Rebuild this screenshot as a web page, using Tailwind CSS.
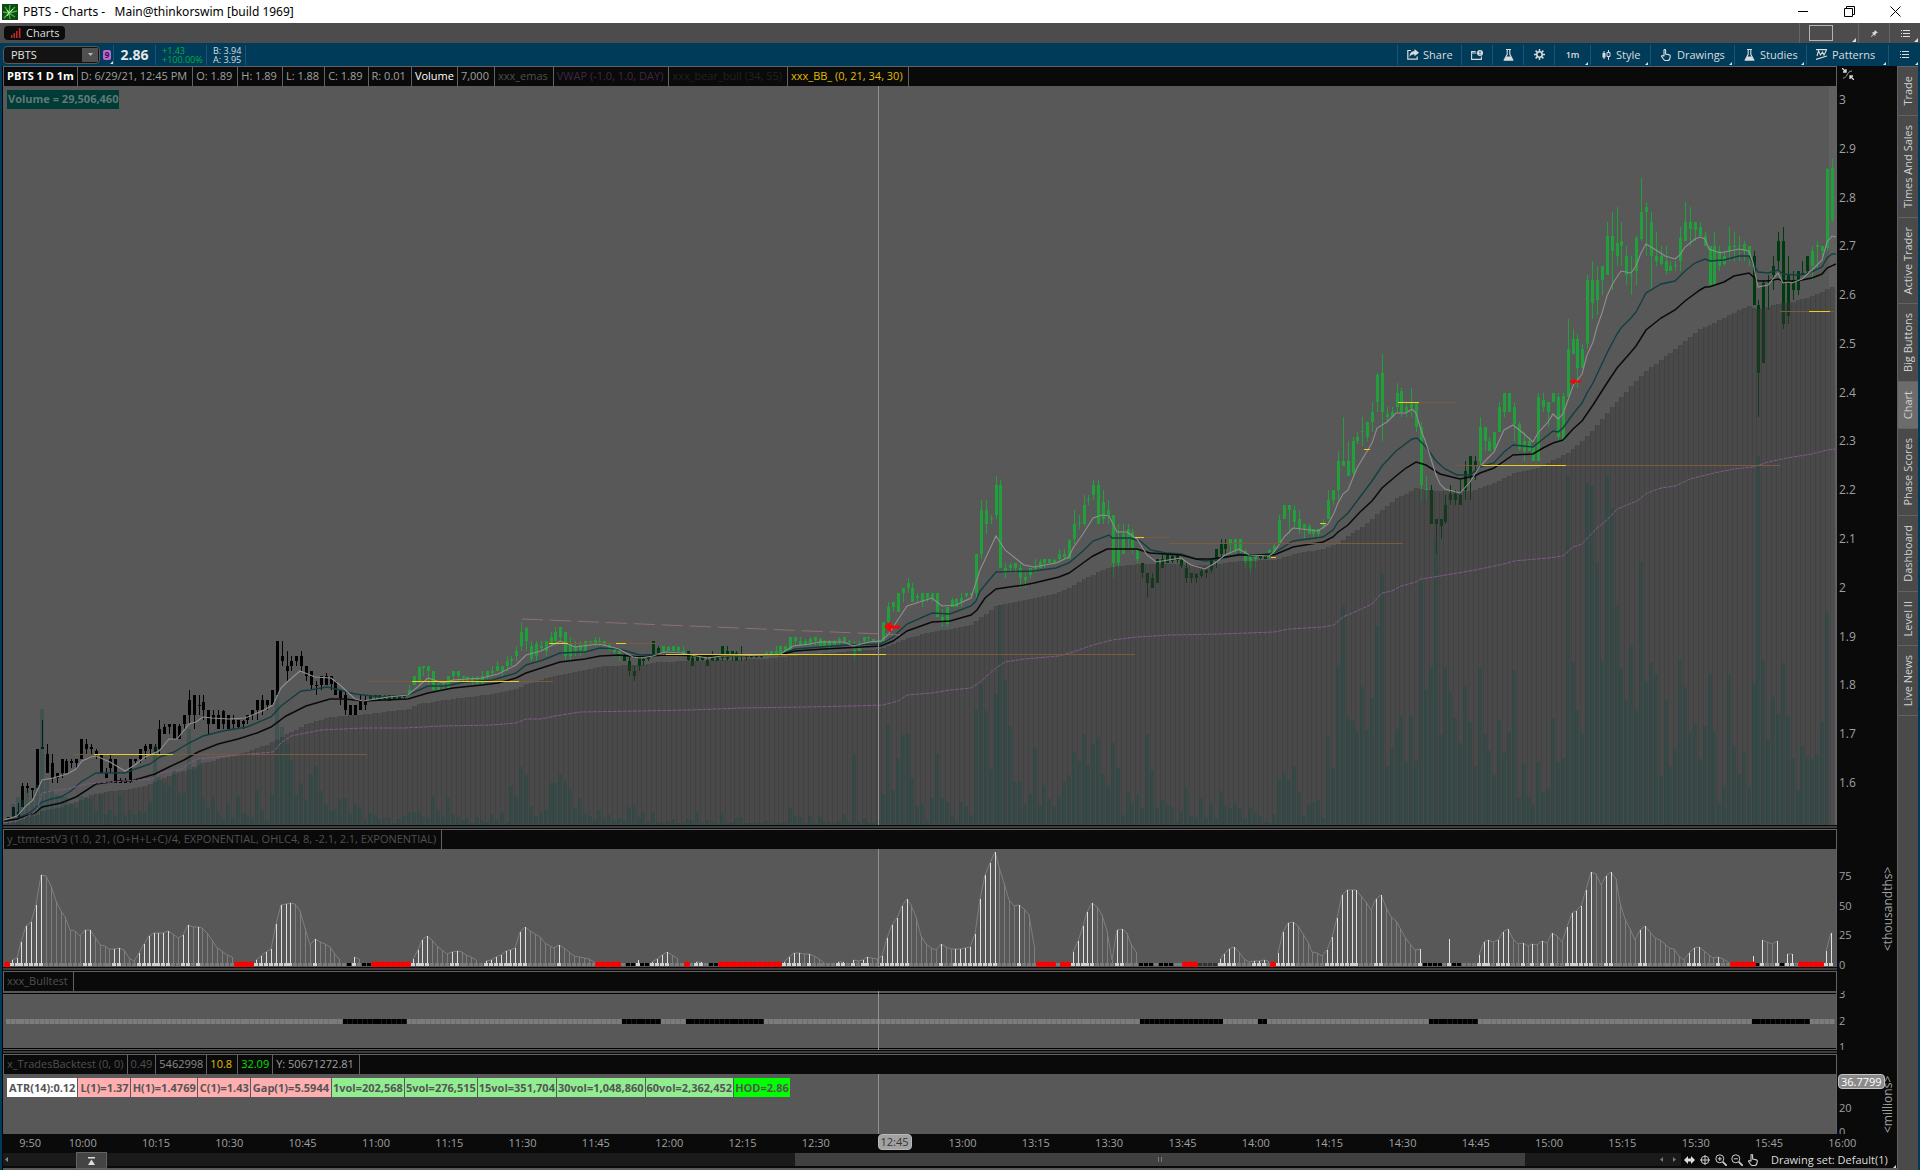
<!DOCTYPE html>
<html lang="en">
<head>
    <meta charset="UTF-8">
    <meta name="viewport" content="width=device-width, initial-scale=1.0">
    <title>PBTS - Charts - Main@thinkorswim [build 1969]</title>
    <script src="https://cdn.jsdelivr.net/npm/@tailwindcss/browser@4"></script>
</head>
<body class="bg-[#0a0a0a] font-['Open_Sans','Noto_Sans',sans-serif] text-[11px] leading-4 text-[#a0a0a0]">
<div class="min-h-screen flex flex-col">

    <!-- Title bar -->
    <header class="h-[23px] shrink-0 bg-white text-black flex items-center pl-[2px]">
        <svg class="w-4 h-4 shrink-0" viewBox="0 0 16 16">
            <rect width="16" height="16" fill="#0b4a13"/>
            <path d="M7 9L3 3M7 9L8 1M7 9l6-6M7 9l8-2M7 9l6 4M7 9l1 6M7 9l-5 5M7 9L1 8" stroke="#4fb045" stroke-width="1.300"/>
            <path d="M7 9L5 6M7 9l4-4M7 9l-2 3" stroke="#c8f5b4" stroke-width="1"/>
        </svg>
        <h1 class="ml-[5px] text-[12px] font-['Noto_Sans',sans-serif] whitespace-pre">PBTS - Charts -   Main@thinkorswim [build 1969]</h1>
        <div class="ml-auto mr-[2px] flex">
            <button aria-label="Minimize" class="w-[46px] h-[23px] flex items-center justify-center"><svg class="w-[11px] h-[11px]" viewBox="0 0 11 11"><path d="M0 5.5h10" stroke="#000"/></svg></button>
            <button aria-label="Restore" class="w-[46px] h-[23px] flex items-center justify-center"><svg class="w-[11px] h-[11px]" viewBox="0 0 11 11" fill="none" stroke="#000"><path d="M.5 2.5h8v8h-8zM2.5 2.5v-2h8v8h-2"/></svg></button>
            <button aria-label="Close" class="w-[46px] h-[23px] flex items-center justify-center"><svg class="w-[11px] h-[11px]" viewBox="0 0 11 11" stroke="#000"><path d="M.5.5l10 10M10.500.5l-10 10"/></svg></button>
        </div>
    </header>

    <!-- Tab row -->
    <nav class="h-5 shrink-0 bg-[#4c4c4c] flex items-center text-[#dcdcdc]">
        <a href="#" class="ml-1 h-[14px] w-[61px] rounded bg-[#0c0c0c] flex items-center pl-[7px] gap-[5px]">
            <svg class="w-[10px] h-[10px]" viewBox="0 0 10 10" fill="#c22a22"><path d="M0 7h1.500v3H0zM2.500 5H4v5H2.500zM5 3h1.500v7H5zM7.800 0h1.700v10H7.800z"/></svg>
            Charts
        </a>
        <div class="ml-auto flex h-full">
            <button aria-label="Layout" class="relative w-[59px] border-l border-[#646464] flex items-center pl-[9px]">
                <span class="block w-6 h-4 border border-[#b4b4b4]"></span>
                <svg class="absolute right-[2px] bottom-[1px] w-1 h-1" viewBox="0 0 4 4"><path d="M4 0v4H0z" fill="#ddd"/></svg>
            </button>
            <button aria-label="Pin" class="w-[31px] border-l border-[#646464] flex items-center justify-center"><svg class="w-[7px] h-[7px]" viewBox="0 0 9 9"><path d="M5 0l4 3.500-2 .5-1.500 2 .2 2L3.600 6 .5 9 0 8.500 2.800 5.200 1 3.400 3 3l1.800-1.500z" fill="#d8d8d8"/></svg></button>
            <button aria-label="Menu" class="relative w-[31px] border-l border-[#646464] flex items-center justify-center">
                <svg class="w-[9px] h-[9px]" viewBox="0 0 9 9" fill="#ddd"><path d="M0 1h1v1H0zM2 1h7v1H2zM0 4h1v1H0zM2 4h7v1H2zM0 7h1v1H0zM2 7h7v1H2z"/></svg>
                <svg class="absolute right-[2px] bottom-[1px] w-1 h-1" viewBox="0 0 4 4"><path d="M4 0v4H0z" fill="#ddd"/></svg>
            </button>
        </div>
    </nav>

    <!-- Symbol toolbar -->
    <div class="h-[23px] shrink-0 bg-[#003b5a] flex items-center text-[#dcdcdc] pl-[3px]">
        <label class="flex items-center w-[97px] h-[18px] rounded-sm border border-[#5a5a5a] bg-[#131313]">
            <input aria-label="Symbol" value="PBTS" class="min-w-0 flex-1 h-full bg-transparent pl-[7px] text-[#e4e4e4]">
            <span class="w-4 h-[14px] mr-px bg-[#505050] flex items-center justify-center"><svg class="w-[5px] h-[3px]" viewBox="0 0 5 3"><path d="M0 0h5L2.500 3z" fill="#bbb"/></svg></span>
        </label>
        <button class="relative w-[13px] h-full flex items-center pl-[3px]">
            <span class="w-2 h-[10px] rounded-xs bg-[#c164cf] text-[8px] leading-[10px] text-[#37123f] text-center font-bold">9</span>
            <svg class="absolute right-0 bottom-[2px] w-[3px] h-[3px]" viewBox="0 0 4 4"><path d="M4 0v4H0z" fill="#ddd"/></svg>
        </button>
        <div class="w-[42px] h-5 border-l border-[#1d5374] flex items-center justify-center text-[14px] font-bold text-[#e6e6e6]">2.86</div>
        <div class="w-[51px] h-5 border-l border-[#1d5374] pl-[6px] text-[9px] leading-[9px] pt-px text-[#00b140]">+1.43<br>+100.00%</div>
        <div class="w-[40px] h-5 border-x border-[#1d5374] pl-[6px] text-[9px] leading-[9px] pt-px whitespace-nowrap">B: 3.94<br>A: 3.95</div>
        <div class="ml-auto flex h-5">
            <button class="w-16 border-l border-[#1d5374] flex items-center gap-1 pl-[9px]">
                <svg class="w-3 h-[11px]" viewBox="0 0 12 11"><path d="M4 1.500H.8v8.700h9.400V7.500" fill="none" stroke="#dcdcdc" stroke-width="1.200"/><path d="M7.500 0L12 3.700 7.500 7.300V5.200C5 5.200 3.500 6 2.500 8c0-3.500 2-5.800 5-6z" fill="#dcdcdc"/></svg>Share</button>
            <button aria-label="Snapshot" class="w-[31px] border-l border-[#1d5374] flex items-center justify-center"><svg class="w-3 h-[10px]" viewBox="0 0 12 10"><path d="M5.500 3H.600v6.400h9.800V6.500M.600 3V1.500h4" fill="none" stroke="#dcdcdc" stroke-width="1.100"/><circle cx="9" cy="3" r="3" fill="#dcdcdc"/><path d="M9 1.200v2.200M9 4v.8" stroke="#003b5a"/></svg></button>
            <button aria-label="Lab" class="w-[31px] border-l border-[#1d5374] flex items-center justify-center"><svg class="w-[11px] h-3" viewBox="0 0 11 12"><path d="M3 .5h5M4.200.5v4.800L1.200 11h8.600l-3-5.700V.5" fill="none" stroke="#dcdcdc" stroke-width="1.100"/><path d="M3.200 7.500h4.600L10 11.500H1z" fill="#dcdcdc"/></svg></button>
            <button aria-label="Settings" class="w-[31px] border-l border-[#1d5374] flex items-center justify-center"><svg class="w-[11px] h-[11px]" viewBox="0 0 11 11" stroke="#dcdcdc" fill="none"><circle cx="5.500" cy="5.500" r="2.700" stroke-width="1.600"/><path d="M5.500 0v2.200M5.500 8.800V11M0 5.500h2.200M8.800 5.500H11M1.600 1.600l1.600 1.600M7.800 7.800l1.600 1.600M1.600 9.400l1.600-1.600M7.800 3.200l1.600-1.600" stroke-width="1.500"/></svg></button>
            <button class="relative w-9 border-l border-[#1d5374] text-[9px] font-semibold">1m<svg class="absolute right-[2px] bottom-0 w-[3px] h-[3px]" viewBox="0 0 4 4"><path d="M4 0v4H0z" fill="#ddd"/></svg></button>
            <button class="relative w-[60px] border-l border-[#1d5374] flex items-center gap-[5px] pl-[11px]">
                <svg class="w-[9px] h-[10px]" viewBox="0 0 9 10"><path d="M2 1v8M6.500 0v10" stroke="#dcdcdc"/><path d="M.5 3h3v4.500h-3z" fill="#dcdcdc"/><path d="M5 2.500h3v4H5z" fill="#003b5a" stroke="#dcdcdc"/></svg>Style<svg class="absolute right-[2px] bottom-0 w-[3px] h-[3px]" viewBox="0 0 4 4"><path d="M4 0v4H0z" fill="#ddd"/></svg></button>
            <button class="relative w-[84px] border-l border-[#1d5374] flex items-center gap-[6px] pl-[10px]">
                <svg class="w-[10px] h-3" viewBox="0 0 10 12"><path d="M3 7V1.300C3 .2 4.600.2 4.600 1.300V5l4 .9c.6.200.8.600.7 1.200L8.700 10c-.3 1-1 1.500-2 1.500H4.500c-.8 0-1.300-.3-1.800-1L.6 7.600c-.3-.8.7-1.300 1.300-.7z" fill="none" stroke="#dcdcdc" stroke-width="1.100"/></svg>Drawings<svg class="absolute right-[2px] bottom-0 w-[3px] h-[3px]" viewBox="0 0 4 4"><path d="M4 0v4H0z" fill="#ddd"/></svg></button>
            <button class="relative w-[72px] border-l border-[#1d5374] flex items-center gap-[5px] pl-[9px]">
                <svg class="w-[11px] h-3" viewBox="0 0 11 12"><path d="M3 .5h5M4.200.5v4.800L1.200 11h8.600l-3-5.700V.5" fill="none" stroke="#dcdcdc" stroke-width="1.100"/><path d="M3.200 7.500h4.600L10 11.500H1z" fill="#dcdcdc"/></svg>Studies<svg class="absolute right-[2px] bottom-0 w-[3px] h-[3px]" viewBox="0 0 4 4"><path d="M4 0v4H0z" fill="#ddd"/></svg></button>
            <button class="relative w-[82px] border-l border-[#1d5374] flex items-center gap-[5px] pl-[9px]">
                <svg class="w-[11px] h-[11px]" viewBox="0 0 11 11" fill="none" stroke="#dcdcdc" stroke-width="1.100"><path d="M0 .600h11M0 10.400L11 7M1 7l1.500-5 2 4L6.500 3 8 6l2.500-5"/></svg>Patterns<svg class="absolute right-[2px] bottom-0 w-[3px] h-[3px]" viewBox="0 0 4 4"><path d="M4 0v4H0z" fill="#ddd"/></svg></button>
            <button aria-label="Chart menu" class="relative w-8 border-l border-[#1d5374] flex items-center justify-center"><svg class="w-[9px] h-[9px]" viewBox="0 0 9 9" fill="#ddd"><path d="M0 1h1v1H0zM2 1h7v1H2zM0 4h1v1H0zM2 4h7v1H2zM0 7h1v1H0zM2 7h7v1H2z"/></svg><svg class="absolute right-[2px] bottom-0 w-[3px] h-[3px]" viewBox="0 0 4 4"><path d="M4 0v4H0z" fill="#ddd"/></svg></button>
        </div>
    </div>

    <div class="flex-1 flex border-x-2 border-[#003b5a]">
        <main class="flex-1 min-w-0 flex flex-col pl-px">

            <!-- Price -->
            <section class="flex-1 flex">
                <div class="flex-1 min-w-0 flex flex-col border-t border-r border-[#626262]">
                    <div class="h-[19px] shrink-0 flex border-l border-[#626262] leading-[18px] whitespace-nowrap">
                        <span class="px-[3px] border-r border-[#626262] text-white font-bold">PBTS 1 D 1m</span>
                        <span class="pl-[3px] pr-[5px] border-r border-[#626262]">D: 6/29/21, 12:45 PM</span>
                        <span class="pl-[3px] pr-[5px] border-r border-[#626262]">O: 1.89</span>
                        <span class="pl-[3px] pr-[5px] border-r border-[#626262]">H: 1.89</span>
                        <span class="pl-[3px] pr-[5px] border-r border-[#626262]">L: 1.88</span>
                        <span class="pl-[3px] pr-[5px] border-r border-[#626262]">C: 1.89</span>
                        <span class="pl-[3px] pr-[5px] border-r border-[#626262]">R: 0.01</span>
                        <span class="px-[3px] border-r border-[#626262] text-white">Volume</span>
                        <span class="pl-[3px] pr-[5px] border-r border-[#626262]">7,000</span>
                        <span class="pl-[3px] pr-[5px] border-r border-[#626262] text-[#505050]">xxx_emas</span>
                        <span class="pl-[3px] pr-[5px] border-r border-[#626262] text-[#3f2745]">VWAP (-1.0, 1.0, DAY)</span>
                        <span class="pl-[3px] pr-[5px] border-r border-[#626262] text-[#222]">xxx_bear_bull (34, 55)</span>
                        <span class="pl-[3px] pr-[5px] border-r border-[#626262] text-[#e0bd00]">xxx_BB_ (0, 21, 34, 30)</span>
                    </div>
                    <div class="relative flex-1 min-h-[300px] bg-[#585858]">
                        <svg id="price" class="absolute inset-0 w-full h-full" viewBox="3 86 1833 739" preserveAspectRatio="none"></svg>
                        <span class="absolute left-1 top-1 h-[19px] leading-[18px] px-px bg-[#003b36] text-[#5f7a77] font-bold">Volume = 29,506,460</span>
                    </div>
                </div>
                <div class="relative w-[60px] pt-[26px] pb-[34px] pl-[2px] flex flex-col justify-between text-[12px]">
                    <svg class="absolute left-[5px] top-[2px] w-3 h-3" viewBox="0 0 12 12" fill="none" stroke="#ddd"><path d="M0 0l3.500 3.500M4 1v3H1M12 12L8.500 8.500M8 11V8h3" stroke-width="1.300"/><path d="M1 10c2 0 3-1 4-3s2-4 5-4" stroke="#999"/></svg>
                    <span>3</span><span>2.9</span><span>2.8</span><span>2.7</span><span>2.6</span><span>2.5</span><span>2.4</span><span>2.3</span><span>2.2</span><span>2.1</span><span>2</span><span>1.9</span><span>1.8</span><span>1.7</span><span>1.6</span>
                </div>
            </section>
            <div class="h-1 shrink-0 mr-[60px] border-y border-[#0a0a0a] bg-[#3c3c3c]"></div>

            <!-- Histogram study -->
            <section class="flex shrink-0">
                <div class="flex-1 min-w-0 border-t border-r border-[#626262]">
                    <div class="h-[19px] flex border-l border-[#626262] leading-[18px] whitespace-nowrap">
                        <span class="pl-[3px] pr-[5px] border-r border-[#626262] text-[#505050]">y_ttmtestV3 (1.0, 21, (O+H+L+C)/4, EXPONENTIAL, OHLC4, 8, -2.1, 2.1, EXPONENTIAL)</span>
                    </div>
                    <svg id="hist" class="block w-full h-[118px] bg-[#585858]" viewBox="3 849 1833 118" preserveAspectRatio="none"></svg>
                </div>
                <div class="w-[60px] flex justify-between pl-[2px] pr-px">
                    <div class="flex flex-col justify-between pt-[39px] -mb-[6px]"><span>75</span><span>50</span><span>25</span><span>0</span></div>
                    <div class="[writing-mode:vertical-rl] rotate-180 text-center pb-[22px] text-[12px]">&lt;thousandths&gt;</div>
                </div>
            </section>
            <div class="h-1 shrink-0 mr-[60px] border-y border-[#0a0a0a] bg-[#3c3c3c]"></div>

            <!-- Bull test -->
            <section class="flex shrink-0">
                <div class="flex-1 min-w-0 border-t border-r border-[#626262]">
                    <div class="h-[19px] flex border-l border-[#626262] leading-[18px] whitespace-nowrap">
                        <span class="pl-[3px] pr-[5px] border-r border-[#626262] text-[#505050]">xxx_Bulltest</span>
                    </div>
                    <svg id="bull" class="block w-full h-[59px] bg-[#585858]" viewBox="3 991 1833 59" preserveAspectRatio="none"></svg>
                </div>
                <div class="w-[60px] pt-5 flex">
                    <div class="h-[59px] pl-[2px] overflow-hidden flex flex-col justify-between"><span class="-mt-[5px]">3</span><span>2</span><span class="-mb-[5px]">1</span></div>
                </div>
            </section>
            <div class="h-1 shrink-0 mr-[60px] border-y border-[#0a0a0a] bg-[#3c3c3c]"></div>

            <!-- Trades backtest -->
            <section class="flex shrink-0">
                <div class="flex-1 min-w-0 border-t border-r border-[#626262]">
                    <div class="h-[19px] flex border-l border-[#626262] leading-[18px] whitespace-nowrap">
                        <span class="px-[3px] border-r border-[#626262] text-[#505050]">x_TradesBacktest (0, 0)</span>
                        <span class="px-[3px] border-r border-[#626262] text-[#505050]">0.49</span>
                        <span class="px-[3px] border-r border-[#626262] text-[#8a8a8a]">5462998</span>
                        <span class="pl-[3px] pr-[5px] border-r border-[#626262] text-[#e0bd00]">10.8</span>
                        <span class="px-[3px] border-r border-[#626262] text-[#00e000]">32.09</span>
                        <span class="pl-[3px] pr-[5px] border-r border-[#626262]">Y: 50671272.81</span>
                    </div>
                    <div class="relative h-[60px] bg-[#585858]">
                        <svg id="trades" class="absolute inset-0 w-full h-full" viewBox="3 1074 1833 60" preserveAspectRatio="none"></svg>
                        <div class="absolute left-1 top-1 flex gap-px font-bold text-[#555] leading-[19px] whitespace-nowrap">
                            <span class="px-[2px] bg-white">ATR(14):0.12</span>
                            <span class="pl-[2px] pr-px bg-[#ffafaf]">L(1)=1.37</span>
                            <span class="pl-[2px] pr-px bg-[#ffafaf]">H(1)=1.4769</span>
                            <span class="pl-[2px] pr-px bg-[#ffafaf]">C(1)=1.43</span>
                            <span class="px-[2px] bg-[#ffafaf]">Gap(1)=5.5944</span>
                            <span class="px-px bg-[#90ee90]">1vol=202,568</span>
                            <span class="px-px bg-[#90ee90]">5vol=276,515</span>
                            <span class="px-px bg-[#90ee90]">15vol=351,704</span>
                            <span class="px-px bg-[#90ee90]">30vol=1,048,860</span>
                            <span class="px-px bg-[#90ee90]">60vol=2,362,452</span>
                            <span class="px-px bg-[#00ff00]">HOD=2.86</span>
                        </div>
                    </div>
                </div>
                <div class="relative w-[60px] pt-5 flex justify-between pr-px">
                    <div class="h-[60px] pl-[2px] pt-[26px] overflow-hidden flex flex-col justify-between"><span>20</span><span class="-mb-[6px]">0</span></div>
                    <div class="[writing-mode:vertical-rl] rotate-180 text-center text-[12px]">&lt;millions&gt;</div>
                    <span class="absolute left-px top-5 h-[15px] leading-[13px] px-[2px] rounded border border-[#c4c4c4] bg-[#8a8a8a] text-white">36.7799</span>
                </div>
            </section>

            <!-- Time axis -->
            <div class="h-[19px] shrink-0 flex leading-[18px] pr-[18px]">
                <span class="w-[43px] shrink-0 text-right pr-[5px]">9:50</span>
                <div class="flex-1 grid grid-cols-[repeat(25,minmax(0,1fr))] text-center">
                    <span>10:00</span><span>10:15</span><span>10:30</span><span>10:45</span><span>11:00</span><span>11:15</span><span>11:30</span><span>11:45</span><span>12:00</span><span>12:15</span><span>12:30</span>
                    <span class="ml-[25px] w-[34px] h-4 leading-[14px] rounded border border-[#b8b8b8] bg-[#a2a2a2] text-[#333]">12:45</span>
                    <span>13:00</span><span>13:15</span><span>13:30</span><span>13:45</span><span>14:00</span><span>14:15</span><span>14:30</span><span>14:45</span><span>15:00</span><span>15:15</span><span>15:30</span><span>15:45</span><span>16:00</span>
                </div>
            </div>

            <!-- Scroll bar and chart tools -->
            <div class="h-[17px] shrink-0 flex border-b-2 border-[#5a5a5a]">
                <div class="flex-1 flex h-[13px] bg-[#1a1a1a]">
                    <button aria-label="Scroll left" class="w-[73px] pl-[2px]"><svg class="w-[3px] h-[5px]" viewBox="0 0 3 5"><path d="M3 0v5L0 2.500z" fill="#888"/></svg></button>
                    <button aria-label="Expand" class="w-[31px] h-[17px] -mt-px bg-[#444] border border-[#636363] flex items-center justify-center"><svg class="w-[7px] h-2" viewBox="0 0 7 8"><path d="M0 0h7v1.500H0zM3.500 2.500L7 8H0z" fill="#ddd"/></svg></button>
                    <span class="flex-[689]"></span>
                    <span class="flex-[732] bg-[#404040] flex items-center justify-center"><svg class="w-1 h-[5px]" viewBox="0 0 4 5"><path d="M0 0h1v5H0zM3 0h1v5H3z" fill="#777"/></svg></span>
                    <span class="flex-[151] flex items-center justify-end gap-[10px] pr-[5px]">
                        <svg class="w-[3px] h-[5px]" viewBox="0 0 3 5"><path d="M3 0v5L0 2.500z" fill="#777"/></svg>
                        <svg class="w-[3px] h-[5px]" viewBox="0 0 3 5"><path d="M0 0v5l3-2.500z" fill="#777"/></svg>
                    </span>
                </div>
                <div class="w-[216px] h-[13px] flex items-center text-[#dcdcdc] relative">
                    <button aria-label="Fit width" class="w-4 flex justify-center"><svg class="w-[11px] h-2" viewBox="0 0 11 8" fill="#ddd"><path d="M0 4l4-4v2.500h3V0l4 4-4 4V5.500H4V8z"/></svg></button>
                    <button aria-label="Crosshair" class="w-4 flex justify-center"><svg class="w-[10px] h-[10px]" viewBox="0 0 10 10" fill="none" stroke="#ccc"><circle cx="5" cy="5" r="3.800"/><path d="M5 0v10M0 5h10"/></svg></button>
                    <button aria-label="Zoom in" class="w-4 flex justify-center"><svg class="w-3 h-3" viewBox="0 0 12 12" fill="none" stroke="#ccc"><circle cx="4.800" cy="4.800" r="4"/><path d="M2.800 4.800h4M4.800 2.800v4"/><path d="M7.800 7.800l4 4" stroke-width="1.800"/></svg></button>
                    <button aria-label="Zoom out" class="w-4 flex justify-center"><svg class="w-3 h-3" viewBox="0 0 12 12" fill="none" stroke="#ccc"><circle cx="4.800" cy="4.800" r="4"/><path d="M2.800 4.800h4"/><path d="M7.800 7.800l4 4" stroke-width="1.800"/></svg></button>
                    <button aria-label="Pan" class="w-4 flex justify-center"><svg class="w-[10px] h-3" viewBox="0 0 10 12"><path d="M3 7V1.300C3 .2 4.600.2 4.600 1.300V5l4 .9c.6.200.8.600.7 1.200L8.700 10c-.3 1-1 1.500-2 1.500H4.500c-.8 0-1.300-.3-1.800-1L.6 7.600c-.3-.8.7-1.300 1.300-.7z" fill="none" stroke="#ccc" stroke-width="1.100"/></svg></button>
                    <button class="ml-[10px] whitespace-nowrap">Drawing set: Default(1)</button>
                    <svg class="absolute right-[1px] -bottom-[2px] w-[3px] h-[3px]" viewBox="0 0 4 4"><path d="M4 0v4H0z" fill="#ddd"/></svg>
                </div>
            </div>
        </main>

        <!-- Gadget tabs -->
        <aside class="w-[21px] shrink-0 bg-[#4a4a4a] border-l border-t border-[#626262] leading-5 text-[#d0d0d0]">
            <button class="block w-5 py-[9px] border-b border-[#626262]"><span class="block [writing-mode:vertical-rl] rotate-180 whitespace-nowrap">Trade</span></button>
            <button class="block w-5 py-[9px] border-b border-[#626262]"><span class="block [writing-mode:vertical-rl] rotate-180 whitespace-nowrap">Times And Sales</span></button>
            <button class="block w-5 py-[9px] border-b border-[#626262]"><span class="block [writing-mode:vertical-rl] rotate-180 whitespace-nowrap">Active Trader</span></button>
            <button class="block w-5 py-[9px] border-b border-[#626262]"><span class="block [writing-mode:vertical-rl] rotate-180 whitespace-nowrap">Big Buttons</span></button>
            <button class="block w-5 py-[9px] border-b border-[#626262] bg-[#6c6c6c]"><span class="block [writing-mode:vertical-rl] rotate-180 whitespace-nowrap">Chart</span></button>
            <button class="block w-5 py-[9px] border-b border-[#626262]"><span class="block [writing-mode:vertical-rl] rotate-180 whitespace-nowrap">Phase Scores</span></button>
            <button class="block w-5 py-[9px] border-b border-[#626262]"><span class="block [writing-mode:vertical-rl] rotate-180 whitespace-nowrap">Dashboard</span></button>
            <button class="block w-5 py-[9px] border-b border-[#626262]"><span class="block [writing-mode:vertical-rl] rotate-180 whitespace-nowrap">Level II</span></button>
            <button class="block w-5 py-[9px] border-b border-[#626262]"><span class="block [writing-mode:vertical-rl] rotate-180 whitespace-nowrap">Live News</span></button>
        </aside>
    </div>
</div>

<script>
    const STEP = 4.89;
    const barX = k => 7.8 + STEP * k;
    const priceY = c => 783 - (c - 160) * 4.88;

    // one minute bars in cents: high, body top, body bottom, low
    const candles = [
        153,153,153,153, 155,155,153,153, 156,154,153,153, 160,159.4,155,155, 160,159.4,159,158, 159,159,158.6,157, 167,167,159,159, 173,167.4,167,167, 168,166,162,162, 166,164,161,160,
        162,162,161,160, 165,165,162,161, 165,164.6,162,162, 165,164.6,164,163, 165,165,164,163, 169,169,165,165, 169,168,167,166, 168,167.4,167,166, 167,166.5,166,165, 166,166,162,162,
        163,162,161,161, 166,165,163,162, 165,165,160,160, 161,160.5,160,160, 161,160.5,160,160, 165,165,160.5,160, 165,165,164.5,164, 167,167,165,164, 168,167.6,166.5,165, 168,168,167,166,
        168,167.3,166.4,166, 173,171,167,166, 172,171.4,170,170, 172,172,171.4,170, 172,172,169,169, 172,171.7,169,169, 174,174,172,171, 179,177,174,172, 178,178,174,171, 178,176,175.8,174,
        178,176.7,175,173, 175,175,172,170, 175,174,172,172, 175,174,171,171, 175,174.7,172,171, 174,174,171,171, 174,173,172,171, 173,173,171.5,171, 173,172.8,172,171, 174,174,173,172,
        175,175,174,173, 177,177,175,173, 178,177,175,174, 177,177,176,175, 179,179,176,176, 189,189,178,178, 189,186,185,184, 187,184,183,181, 186,185,184,183, 186,186,185,184,
        187,186,184,183, 184,184,182,181, 183,183,180,179, 181,180,179.8,178, 182,182,180,179, 182.5,182,180,180, 182,182,180.3,179, 181,181,178,178, 179,179,177.5,176, 179,178,175,174,
        176,176,174,174, 176,176,174,174, 178,177,175,175, 178,177,176,175, 178,178,177,177, 178,178,177.6,177, 178,178,177,177, 178,177.8,177.3,177, 178,178,176.8,176.8, 178,178,177,177,
        178,178,177.2,177, 178,178,177.6,177, 180,179,178,178, 182,182,180,180, 184,183.7,181,180, 184,184,183.6,182, 184,184,183,180, 183,183,179,179, 181,180,179,179, 181,180,179.6,179,
        182,182,179.5,179, 183,183,182,181, 183,183,182,181, 182,182,181.6,181, 182,181.7,181.4,181, 182,181.6,181,180, 182,181.5,180.5,180, 183,182,180.5,180, 183,183,182,181, 184,183,182.6,182,
        185,184,183,183, 184,184,183,182, 186,185,184,183, 186,185.4,185,184, 188,187,186,185, 193,191,188,187, 192,191.8,189,187, 189,188,185.5,185, 189,188.5,186,185, 189,188,187.6,187,
        189,189,187,186, 191,190,188.6,188, 192,191,189,188, 192,192,190,189, 191,191,186,185, 190,188.6,186,185, 189,188,187,186, 189,188.3,187.3,186, 189,189,187,187, 189,189,188.8,188,
        190,189.3,188.6,188, 190,189.2,188.8,188, 189,189,188.2,188, 188.5,188.3,187.3,187, 187.6,187.5,186.8,186, 187,187,186,185, 186.4,186,185,185, 186,185,183,182, 184,183,182,181, 186,186,184,183,
        186,185.4,185,184, 186,186,185.5,185, 189,189,186,186, 188,187.6,186.6,186, 188,188,187,186, 188,187.8,187,187, 188,188,187,187, 188,187.8,187,186, 188,187,186,186, 187,187,185.3,185,
        186,185.6,184,184, 186,186,185,185, 186,186,185.2,185, 186,185.3,184,184, 187,186,185,185, 186,186,185,185, 188,188,185.6,185, 188,187,185.4,185, 187,187,186,185, 187,186.6,185,185,
        188,186.2,186,185, 186,186,185.8,185, 186,186,185.8,185.6, 186,186,185.8,185.6, 186.3,186.2,185.8,185.6, 187,186.6,186,186, 187,187,186.1,186, 188,187,186.3,186, 188,188,186.5,186, 188,188,187,187,
        190,190,187,187, 190,190,189,188, 190,189,188,188, 189.5,189,188.2,188, 190,189.5,188.5,188, 190,190,189,188, 190,189.6,188,188, 189.4,189,188,188, 189.4,189,188,187, 189.3,189,188.2,188,
        190,189.6,189,188, 190,190,189,188, 189.3,189,188.8,188, 189,187.3,186,185, 189,188,187,187, 190,190,189,188, 190,190,189.7,189, 189.6,189.5,189.2,189, 189.6,189.4,188.8,188, 193,193,189,188,
        197,196,193,192, 197,197,196,195, 199,199,195,195, 200,200,199,197, 202,201,200,199, 201,200,197,197, 199,198.4,198,197, 199,199,197,196, 199,199,198,197, 199,199,198,197,
        199,199,194,194, 195.6,194,193,192, 196,196,192.5,192, 198,197.4,196,196, 198,197.7,196,196, 199,198,197,196, 199,199,198.3,198, 199,199,198.6,198, 207,207,199,198, 218,216,207,206,
        218,216,213,211, 215,214.4,214,213, 223,221,215,214, 222,221,204,204, 205,204,203,202, 205,204.7,204,203, 205,205,204,203, 205,204,202,200, 203,202.2,201.7,200, 204,204,202.7,202,
        206,204.2,203.8,203, 206,205.2,204,204, 206,206,205,204, 206,206,205,205, 206,205.7,205,205, 208,207,206,205, 208,207,206.4,206, 210,209.8,206,206, 216,213,210,209, 215,213.2,213,212,
        219,217,213,212.6, 219,218.2,218,217, 222,221,219,218, 222,221,213,213, 220,217.6,214,213, 218,216,215,213, 215,215,205,202, 213,208,205,204, 213,211,207,207, 213,212,210,208,
        212,211.4,208,207, 208,208,206,205, 205,205,203,202, 203,203,201,198, 203,202,200,200, 206,206,201,201, 207,206,204,204, 207,207,205,205, 207,206.6,205.5,205, 207,207,205.7,205,
        206,205.6,204.5,204, 205,204,202,201, 203,203,202,201, 203,202.8,202,201, 204,203.5,202.5,202, 204,203.7,203,202, 206,206,203.7,203, 208,208,205.5,204, 210,209,207,206, 210,209,208,207,
        210,210,209,207, 210,210,207.8,207, 210,210,207.6,207, 208,207.6,205,204, 207,207,204,203, 207,207,206,204, 207,207,206.2,206, 207,207,206,206, 208,207.8,207,206, 209,208.6,207,207,
        215,213.8,209,209, 217,217,214,214, 217,217,216,211, 217,216,213.5,212, 216,214,212,211, 213,213,212,210, 213,212.6,211,211, 212,212,211,210, 212,212,211,210, 214,213,212.7,212,
        220,218,214,214, 220,220,218,217, 228,226,220,218, 235,226,225,225, 230,226,223,223, 231,230,223.5,223, 232,231,230,229.5, 235,232.1,232,229, 234,234,231,230, 238,236,234,232,
        244,243.6,238,236, 248,244,236,230, 237,235.6,235,234, 237,236,235,235, 242,240,237,236, 241,240.4,236,235, 238,237,236,235, 241,238,236.8,235, 238,238,233,232, 234,233,221,218,
        223,220.2,220,218, 221,220,213,213, 214,214,213,207, 214,214,212.6,210, 219,217,213.5,213, 221,219.2,218,217, 220,219.2,218,217, 222,219,217,217, 226,224,220,218, 227,227,223,218,
        227,226,225,222, 235,233,226,225, 233,233,230,228, 231,230,228,228, 232,232,228.4,228, 238,237,232,232, 240,240,236,235, 240,240,236,236, 238,237,233.6,230, 234,233.6,228.5,228,
        232,230,228,226, 231,230,228,228, 229,229,226,226, 240,239,226,226, 240,238.5,237,236, 238,238,236,233, 240,240,238,238, 240,239,231,230, 240,239.4,230,230, 255,249,239,239,
        253,251,248,248, 252,251,245,241, 250,249,245,245, 264,263,250,249, 267,263,258.4,255, 266,263,259,256, 266,266,263,260, 275,272,264,264, 277,272,269,261, 278,270.6,268,266,
        275,271,270,266, 270,268,264,262, 268,264.1,263.9,260, 272,271.6,265,262, 284,277,271.5,271, 279,278,277,268, 277,275,268,261, 273,268,267,266, 270,268,266.4,266, 270,267,265,264,
        267,266,265,265, 267,266.1,265.9,265, 274,271.6,267,265, 279,275,271,271, 278,275,273.6,270, 275,275,273.4,271, 275,274,272,272, 273,272,270,270, 270,270,262,262, 273,270,262,262,
        270,269,266,265, 269,268,266.4,266, 274,270,269,267, 273,270.1,269.8,267, 272,270.1,269.8,267, 271,270.4,269,267, 270,270,268,266, 269,268,258,258, 259,258,244,235, 263,262.5,246,246,
        264,263.1,262.9,257, 268,266,264,261, 273,271,267,265, 274,271,254,253, 268,264,255.6,254, 265,263,261,259, 265,265,261,260, 267,264.6,264,264, 268,268,265,264, 270,269,266,263,
        271,270.2,269.9,265, 270,270,269,267, 286,285.8,269.6,269, 288,286,275.4,275
    ];

    const volumes = [
        5,21,28,25,35,25,40,116,45,35,30,30,28,22,17,29,28,26,15,30,11,15,10,30,10,15,11,14,13,24,
        80,48,42,40,55,32,34,96,55,66,28,18,28,14,6,22,8,29,12,10,8,36,16,5,31,130,98,81,65,31,
        42,25,51,59,34,21,14,15,26,27,12,21,18,6,12,10,6,8,7,2,6,9,13,13,14,8,7,29,14,8,
        27,11,8,5,7,2,8,5,3,11,5,13,3,39,29,58,50,19,9,12,15,42,42,51,44,36,17,27,12,9,
        5,15,8,10,5,7,5,18,20,8,13,3,13,3,2,4,6,2,2,6,5,13,2,5,4,2,12,2,3,7,
        8,2,2,2,2,4,2,1,2,2,17,9,8,2,9,2,8,4,3,2,4,11,2,70,3,7,3,2,5,31,
        100,35,67,90,91,47,19,22,4,27,71,27,23,10,4,23,19,10,115,141,114,56,131,220,145,99,43,43,21,31,
        77,19,40,26,19,28,43,50,73,64,91,60,81,88,51,40,82,57,10,33,22,30,17,91,55,17,25,20,18,4,
        14,38,9,8,28,8,22,7,34,20,17,22,17,7,17,12,9,3,2,11,46,52,45,59,33,9,20,23,25,7,
        89,57,160,220,108,105,94,138,95,127,199,252,59,77,96,109,64,109,64,245,135,158,285,90,158,134,107,82,140,103,
        59,157,91,74,50,105,72,93,155,27,61,28,20,63,33,37,107,63,67,350,163,115,92,342,339,263,164,350,317,220,
        157,125,180,116,263,144,163,151,49,125,58,76,165,138,94,101,66,99,152,94,22,38,150,78,51,73,38,142,369,165,
        86,128,111,162,109,67,35,79,69,66,70,103,212,0
    ];

    const momentum = [
        0,3,5,21,37,41,58,88,87,77,62,52,46,33,32,27,33,33,26,18,17,14,14,15,13,5,2,10,19,27,
        30,30,30,32,29,25,28,38,36,36,35,30,23,15,12,8,6,0,0,0,0,3,7,11,14,39,58,59,60,59,
        52,35,18,24,21,19,16,10,4,0,0,6,4,0,0,0,0,0,0,0,0,0,0,4,13,23,27,23,17,13,
        9,11,12,11,8,6,3,0,2,3,6,8,12,13,15,31,36,32,29,26,20,17,15,18,15,11,7,6,5,4,
        1,0,0,0,0,0,0,0,0,3,0,0,1,4,8,11,8,5,0,0,0,1,1,0,0,0,0,0,0,0,
        0,0,0,0,0,0,0,0,0,1,6,10,10,9,9,7,4,1,0,0,1,1,0,3,2,3,6,5,4,7,
        25,38,45,57,64,58,46,27,19,15,13,19,16,14,14,14,15,16,29,64,88,100,111,96,80,63,57,58,54,48,
        18,0,0,0,0,0,0,0,11,22,37,51,60,56,48,32,3,33,34,30,19,11,0,0,0,0,0,0,0,0,
        0,0,0,0,0,0,0,0,4,9,14,16,11,4,1,2,2,3,2,0,10,31,40,41,37,29,21,11,10,7,
        13,26,45,68,73,73,73,67,61,53,64,68,56,46,42,35,26,19,13,14,0,0,0,0,0,24,0,0,0,0,
        0,8,21,23,21,23,31,34,24,19,20,17,19,18,22,20,30,27,21,36,50,52,57,73,91,89,78,87,91,84,
        60,44,34,23,33,37,31,25,23,19,15,14,7,3,10,15,16,12,8,5,6,4,1,0,0,0,0,7,0,23,
        21,19,22,0,9,9,0,0,0,0,0,0,12,30
    ];

    const darkRuns = [[74, 81], [126, 133], [139, 154], [232, 249], [256, 257], [291, 300], [357, 368]];
    const redRuns = [[0, 0], [47, 50], [75, 82], [121, 125], [139, 139], [146, 158], [211, 214], [216, 217], [241, 243], [259, 259], [353, 357], [367, 371]];
    const blackRuns = [[70, 70], [73, 74], [127, 128], [130, 131], [144, 145], [232, 234], [236, 238], [290, 293], [296, 297], [358, 358], [363, 363]];
    const inRuns = (runs, k) => runs.some(r => k >= r[0] && k <= r[1]);

    const fastMa = '4,820 17,816 27,805 33,800 42,780 53,778 67,774 76,769 82,761 91,757 96,756 110,762 125,771 135,765 145,757 159,751 169,739 177,739 189,724 196,722 203,717 212,718 229,719 245,718 262,711 273,705 281,688 286,683 300,671 315,677 331,678 340,685 355,699 363,701 388,697 408,695 428,678 443,683 453,680 482,678 498,674 516,665 526,655 541,651 560,641 575,647 599,644 619,649 633,657 640,658 653,656 664,652 681,653 707,658 722,656 779,655 793,646 810,644 820,642 844,642 853,646 869,642 881,641 888,635 907,606 932,598 942,606 956,605 971,598 980,570 996,536 1005,550 1024,565 1034,567 1056,563 1069,557 1073,548 1083,534 1093,518 1102,515 1109,516 1117,532 1127,532 1137,539 1147,555 1156,562 1181,558 1191,565 1205,569 1215,563 1225,555 1239,549 1249,555 1269,556 1274,552 1284,537 1293,528 1318,531 1328,524 1334,513 1338,503 1343,494 1348,490 1357,468 1372,443 1377,428 1387,422 1396,413 1406,413 1412,409 1416,413 1421,430 1426,443 1436,475 1440,484 1445,489 1460,493 1470,482 1480,466 1489,457 1494,452 1504,430 1513,425 1523,433 1533,442 1538,433 1548,422 1553,414 1558,419 1563,414 1573,386 1582,374 1587,355 1593,342 1597,327 1602,313 1607,296 1613,283 1621,271 1631,273 1636,266 1641,253 1646,244 1656,250 1665,256 1675,259 1680,255 1685,247 1695,239 1700,237 1705,239 1709,249 1720,253 1739,249 1749,251 1753,263 1758,287 1768,285 1778,273 1783,283 1788,282 1792,283 1802,279 1812,270 1822,260 1827,242 1832,236 1836,237';
    const midMa = '4,821 17,819 32,811 42,802 51,799 61,797 71,791 81,782 96,773 125,773 135,769 150,764 160,757 174,752 189,743 203,736 223,731 247,727 271,717 281,706 301,691 310,690 327,687 340,690 355,694 380,697 408,695 428,686 445,686 465,682 492,680 506,676 516,673 526,665 543,660 560,653 585,652 600,648 619,649 633,653 640,655 681,654 722,656 779,655 795,649 820,647 848,645 881,644 893,637 907,624 932,613 950,614 971,606 976,601 980,591 996,572 1034,571 1056,568 1069,563 1083,551 1093,541 1109,535 1112,538 1130,538 1140,541 1151,550 1166,553 1181,554 1196,559 1205,561 1220,559 1239,554 1252,556 1274,553 1293,541 1323,537 1333,530 1338,522 1348,513 1360,497 1372,481 1382,466 1396,451 1412,439 1417,438 1426,447 1436,461 1445,469 1457,475 1470,475 1480,467 1494,463 1504,452 1513,445 1533,447 1543,439 1553,431 1558,432 1563,428 1573,414 1582,403 1587,393 1593,383 1607,353 1617,334 1621,328 1631,318 1636,312 1646,293 1661,284 1675,281 1685,271 1695,263 1705,259 1710,261 1724,260 1739,256 1749,256 1758,272 1768,273 1778,270 1783,274 1797,275 1807,274 1822,267 1827,258 1832,254 1836,254';
    const slowMa = '4,821 17,819 35,813 42,807 61,803 76,797 96,784 118,781 131,781 155,774 169,767 184,760 198,752 218,744 238,739 257,733 271,727 286,716 306,706 330,699 345,699 364,701 384,700 408,699 428,693 453,688 482,685 498,683 516,678 526,673 560,662 585,659 600,656 619,655 640,657 664,655 713,656 779,655 795,651 824,649 881,646 893,641 907,631 932,622 950,621 971,615 977,610 985,598 996,589 1024,585 1034,583 1059,577 1069,573 1083,563 1093,556 1107,549 1137,549 1150,553 1181,555 1196,559 1211,559 1239,555 1274,555 1293,547 1323,542 1333,537 1338,532 1348,525 1360,512 1372,501 1382,488 1396,476 1406,468 1416,462 1426,465 1440,474 1460,479 1475,476 1480,473 1494,468 1513,455 1533,454 1543,448 1553,443 1563,440 1573,429 1582,421 1593,405 1607,383 1617,368 1631,352 1636,346 1646,330 1661,318 1675,310 1685,301 1700,290 1705,287 1709,287 1724,282 1734,276 1749,273 1758,281 1768,281 1778,279 1783,281 1797,281 1812,278 1822,274 1827,268 1836,264';
    const cloudTop = '4,823 37,815 42,811 61,807 76,802 92,795 110,791 131,789 145,786 160,780 174,774 189,769 203,763 223,758 245,753 271,743 286,735 306,724 330,717 355,715 369,714 408,709 418,704 453,699 492,694 516,689 526,684 555,676 585,670 604,666 640,665 658,662 692,661 762,659 803,655 853,651 881,649 907,638 932,632 951,629 971,625 980,618 996,606 1005,604 1029,599 1054,594 1069,588 1083,580 1102,570 1112,567 1137,564 1158,564 1205,565 1220,564 1239,561 1274,560 1294,554 1323,549 1338,543 1353,533 1367,523 1382,510 1396,499 1416,488 1436,491 1460,492 1475,490 1484,486 1494,483 1514,473 1538,468 1553,460 1568,453 1582,441 1593,430 1607,413 1630,387 1646,371 1661,360 1675,349 1685,341 1700,329 1714,323 1729,315 1739,310 1749,306 1758,309 1768,307 1780,303 1792,302 1807,298 1822,292 1827,289 1833,286 1840,286';
    const vwap = '4,823 17,821 32,814 37,810 42,793 51,791 67,789 86,784 110,782 140,780 153,779 160,773 172,771 182,769 189,763 198,759 218,757 238,755 273,752 281,743 291,736 306,733 321,730 364,728 404,728 443,726 492,725 516,723 526,719 541,719 555,716 580,712 640,711 689,710 742,708 803,707 853,706 883,705 898,701 907,695 932,693 950,690 971,688 980,682 996,668 1005,662 1024,659 1059,656 1073,652 1093,645 1112,640 1137,637 1171,635 1220,634 1274,632 1289,629 1323,627 1334,625 1343,617 1357,611 1372,604 1382,593 1392,591 1401,586 1416,582 1421,579 1440,576 1475,570 1504,564 1514,561 1548,558 1563,556 1573,547 1582,544 1597,528 1607,520 1617,509 1637,501 1647,493 1661,488 1675,486 1690,479 1714,473 1734,469 1753,467 1768,462 1787,458 1812,454 1827,450 1836,449';

    // level lines: y, x1, x2
    const orangeLevels = [[754, 74, 367], [681, 368, 553], [643, 549, 656], [654, 656, 1135], [537, 1144, 1169], [543, 1169, 1403], [402, 1419, 1457], [465, 1457, 1780], [311, 1780, 1834]];
    const yellowLevels = [[754, 94, 173], [681, 412, 519], [643, 549, 568], [643, 616, 626], [654, 666, 886], [537, 1135, 1144], [557, 1271, 1276], [523, 1320, 1326], [449, 1364, 1370], [402, 1398, 1419], [465, 1482, 1566], [311, 1809, 1830]];

    const rect = (x, y, w, h, fill) => `<rect x="${x}" y="${y}" width="${w}" height="${h}" fill="${fill}"/>`;
    const line = (pts, stroke, w, extra = '') => `<polyline points="${pts}" fill="none" stroke="${stroke}" stroke-width="${w}" ${extra}/>`;

    function interpolate(pts, x) {
        for (let i = 1; i < pts.length; i++) {
            if (x <= pts[i][0]) {
                const [x1, y1] = pts[i - 1], [x2, y2] = pts[i];
                return y1 + (y2 - y1) * (x - x1) / (x2 - x1);
            }
        }
        return pts[pts.length - 1][1];
    }

    function drawPrice() {
        const cloud = cloudTop.split(' ').map(p => p.split(',').map(Number));
        let bars = rect(1829, 86, 7, 739, '#606060');
        for (let k = 0; k < candles.length / 4; k++) {
            const [hi, top, bot, lo] = candles.slice(k * 4, k * 4 + 4).map(priceY);
            const x = Math.round(barX(k));
            const bright = k > 73 && !inRuns(darkRuns, k);
            const fill = k < 74 ? '#000' : bright ? '#1fa03a' : '#003b10';
            bars += rect(x, hi, 1, Math.max(lo - hi, 1), fill) + rect(x - 1, top, 3, Math.max(bot - top, 1), fill);
        }
        let shade = '', grid = '', vol = '';
        for (let k = -1; k < 374; k++) {
            const x = Math.round(barX(k) - 2), x2 = Math.round(barX(k + 1) - 2);
            const y = Math.round(interpolate(cloud, x + 2));
            shade += rect(x, y, x2 - x, 825 - y, '#353535');
            grid += rect(x, y, 1, 825 - y, '#353535');
        }
        volumes.forEach((h, k) => { vol += rect(Math.round(barX(k) - 2), 825 - h, 4, h, '#1c4a44'); });

        let lines = line(midMa, '#123f42', 1.4) + line(slowMa, '#0a0a0a', 1.5) + line(fastMa, '#8f8f8f', 1.1);
        lines += line(vwap, '#7f5a87', 1, 'stroke-dasharray="4 1"');
        lines += line('522,619 881,634 900,635', '#8d6f72', 1, 'stroke-dasharray="21 7"');
        let levels = '';
        orangeLevels.forEach(([y, a, b]) => { levels += rect(a, y, b - a, 1, '#7c5b3c'); });
        yellowLevels.forEach(([y, a, b]) => { levels += rect(a, y, b - a, 1, '#f0cc1e'); });
        const arrows = '<path d="M884 626.500l7-5v4h9v3h-9v4zM1569 381.500l6-3v2h6v2h-6v2z" fill="#f00"/>';

        document.getElementById('price').innerHTML =
            `<g shape-rendering="crispEdges">${bars}<g opacity=".42">${shade}</g><g opacity=".3">${grid}</g><g opacity=".38">${vol}</g></g>` +
            lines + `<g shape-rendering="crispEdges">${levels}${rect(878, 86, 1, 739, '#909090')}</g>` + arrows;
    }

    function drawMomentum() {
        let bars = '', row = '', dots = '', path = '';
        momentum.forEach((h, k) => {
            const x = Math.round(barX(k)) - 1;
            const rising = h > 0 && h >= (momentum[k - 1] || 0);
            if (h > 0) {
                bars += rect(x, 963 - h, 1, h, rising ? '#e0e0e0' : '#7e7e7e');
                path += (momentum[k - 1] > 0 ? 'L' : 'M') + x + ' ' + (963 - h);
            }
            if (inRuns(redRuns, k)) dots += `<circle cx="${x}" cy="964.500" r="3" fill="#f00"/>`;
            row += rect(x - 2, 963, 4, 3, inRuns(blackRuns, k) ? '#000' : rising ? '#d0d0d0' : k > 243 && k < 249 ? '#333' : '#7c7c7c');
        });
        document.getElementById('hist').innerHTML =
            `<path d="${path}" fill="none" stroke="#7e7e7e"/><g shape-rendering="crispEdges">${bars}${row}${rect(878, 849, 1, 118, '#909090')}</g>${dots}`;
    }

    function drawBull() {
        const off = [[343, 406], [621, 659], [686, 762], [1139, 1222], [1257, 1266], [1429, 1476], [1750, 1808]];
        let out = rect(3, 993, 1833, 1, '#000') + rect(3, 1048, 1833, 1, '#000');
        for (let k = 0; k < 374; k++) {
            const x = Math.round(barX(k) - 2);
            const isOff = off.some(r => x + 2 >= r[0] && x + 2 < r[1]);
            out += rect(x, 1019, 4, 5, isOff ? '#000' : '#7c7c7c') + rect(x + 4, 1019, 1, 5, isOff ? '#1a1a1a' : '#6e6e6e');
        }
        document.getElementById('bull').innerHTML = `<g shape-rendering="crispEdges">${out}${rect(878, 991, 1, 59, '#909090')}</g>`;
        document.getElementById('trades').innerHTML = rect(878, 1074, 1, 60, '#909090');
    }

    drawPrice();
    drawMomentum();
    drawBull();
</script>
</body>
</html>
